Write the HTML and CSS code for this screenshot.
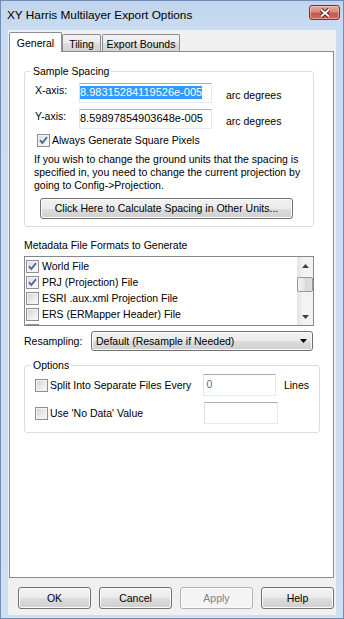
FILE: index.html
```html
<!DOCTYPE html>
<html lang="en">

<head>
  <meta charset="UTF-8">
  <meta name="viewport" content="width=device-width, initial-scale=1.0">
  <title>XY Harris Multilayer Export Options</title>

  <link rel="stylesheet" href="styles.css">
</head>

<body>
  <div id="window">
    <div id="titlebar">
      <span id="title">XY Harris Multilayer Export Options</span>
      <div id="closeBtn">
        <svg width="14" height="10" viewBox="0 0 14 10">
          <path d="M3 1.5 L11 8.5 M11 1.5 L3 8.5" stroke="#5a1a14" stroke-width="3.8" fill="none" />
          <path d="M3 1.5 L11 8.5 M11 1.5 L3 8.5" stroke="#ffffff" stroke-width="2" fill="none" />
        </svg>
      </div>
    </div>

    <div id="client">
      <div class="tabs">
        <div class="tab tabGeneral selected">General</div>
        <div class="tab tabTiling">Tiling</div>
        <div class="tab tabBounds">Export Bounds</div>
      </div>

      <div class="panel">
        <fieldset class="group spacingGroup">
          <legend>Sample Spacing</legend>

          <div class="axisRow">
            <span class="axisLabel">X-axis:</span>
            <div class="textBox axisBox"><span class="selText">8.98315284119526e-005</span></div>
            <span class="units">arc degrees</span>
          </div>

          <div class="axisRow secondRow">
            <span class="axisLabel">Y-axis:</span>
            <div class="textBox axisBox">8.59897854903648e-005</div>
            <span class="units">arc degrees</span>
          </div>

          <div class="checkRow squareRow">
            <span class="check checked">
              <svg width="11" height="11" viewBox="0 0 11 11"><path d="M2 5.2 L4.3 8 L9 2.2" /></svg>
            </span>
            <span>Always Generate Square Pixels</span>
          </div>

          <p class="note">If you wish to change the ground units that the spacing is<br>
            specified in, you need to change the current projection by<br>
            going to Config-&gt;Projection.</p>

          <div class="button calcButton">Click Here to Calculate Spacing in Other Units...</div>
        </fieldset>

        <div class="listTitle">Metadata File Formats to Generate</div>

        <div class="listBox">
          <div class="listItems">
            <div class="listItem">
              <span class="check checked">
                <svg width="11" height="11" viewBox="0 0 11 11"><path d="M2 5.2 L4.3 8 L9 2.2" /></svg>
              </span>
              <span>World File</span>
            </div>
            <div class="listItem">
              <span class="check checked">
                <svg width="11" height="11" viewBox="0 0 11 11"><path d="M2 5.2 L4.3 8 L9 2.2" /></svg>
              </span>
              <span>PRJ (Projection) File</span>
            </div>
            <div class="listItem">
              <span class="check"></span>
              <span>ESRI .aux.xml Projection File</span>
            </div>
            <div class="listItem">
              <span class="check"></span>
              <span>ERS (ERMapper Header) File</span>
            </div>
            <div class="listItem">
              <span class="check"></span>
              <span>TAB (MapInfo) File</span>
            </div>
          </div>
          <div class="scrollBar">
            <div class="scrollArrow">
              <svg width="7" height="4" viewBox="0 0 7 4"><path d="M0 4 L3.5 0 L7 4 Z" /></svg>
            </div>
            <div class="scrollThumb"></div>
            <div class="scrollFill"></div>
            <div class="scrollArrow">
              <svg width="7" height="4" viewBox="0 0 7 4"><path d="M0 0 L7 0 L3.5 4 Z" /></svg>
            </div>
          </div>
        </div>

        <div class="resampleRow">
          <span class="resampleLabel">Resampling:</span>
          <div class="comboBox">
            <span>Default (Resample if Needed)</span>
            <svg width="7" height="4" viewBox="0 0 7 4"><path d="M0 0 L7 0 L3.5 4 Z" /></svg>
          </div>
        </div>

        <fieldset class="group optionsGroup">
          <legend>Options</legend>

          <div class="optionRow">
            <div class="optionLabel">
              <span class="check"></span>
              <span>Split Into Separate Files Every</span>
            </div>
            <div class="textBox optionBox grayText">0</div>
            <span class="linesLabel">Lines</span>
          </div>

          <div class="optionRow secondOption">
            <div class="optionLabel">
              <span class="check"></span>
              <span>Use 'No Data' Value</span>
            </div>
            <div class="textBox optionBox"></div>
          </div>
        </fieldset>
      </div>

      <div class="buttonRow">
        <div class="button dialogButton">OK</div>
        <div class="button dialogButton">Cancel</div>
        <div class="button dialogButton disabled">Apply</div>
        <div class="button dialogButton">Help</div>
      </div>
    </div>
  </div>
</body>

</html>
```

FILE: styles.css
```css
body {
  margin: 0px;
  font-family: "Liberation Sans", Arial, sans-serif;
  font-size: 10.5px;
  line-height: 13px;
  color: #000000;
}

#window {
  display: flex;
  flex-direction: column;
  width: 344px;
  height: 619px;
  box-sizing: border-box;
  background: linear-gradient(#bfd4ed 0px, #cadcf1 30px, #cfdff2 100%);
  box-shadow: inset 0 0 0 1px #6f8fb8;
}

#titlebar {
  display: flex;
  align-items: flex-start;
  height: 30px;
}

#title {
  margin: 8px 0px 0px 7px;
  font-size: 11.8px;
  line-height: 14px;
}

#closeBtn {
  display: flex;
  justify-content: center;
  align-items: center;
  width: 31px;
  height: 15px;
  margin: 5px 4px 0px auto;
  box-sizing: border-box;
  border: 1px solid #7e3128;
  border-radius: 3px;
  background: linear-gradient(#e8a99d 0%, #d88a7d 45%, #c8594a 55%, #cf6a5a 100%);
  box-shadow: inset 0 0 0 1px rgba(255, 220, 210, 0.5);
}

#client {
  display: flex;
  flex-direction: column;
  height: 585px;
  margin: 0px 8px 4px 8px;
  padding-top: 2px;
  box-sizing: border-box;
  background-color: #f0f0f0;
}

/* tabs */

.tabs {
  display: flex;
  align-items: flex-end;
  height: 19px;
  margin-left: 1px;
}

.tab {
  display: flex;
  justify-content: center;
  align-items: center;
  height: 17px;
  padding-top: 2px;
  box-sizing: border-box;
  border: 1px solid #898c95;
  border-bottom: none;
  border-radius: 2px 2px 0px 0px;
  background: linear-gradient(#f3f3f3 0%, #ebebeb 50%, #dddddd 51%, #d4d4d4 100%);
}

.tab.selected {
  position: relative;
  height: 20px;
  margin-bottom: -1px;
  padding-top: 1px;
  background: #ffffff;
}

.tabGeneral {
  width: 53px;
}

.tabTiling {
  width: 39px;
}

.tabBounds {
  width: 78px;
  margin-left: 1px;
}

.panel {
  display: flex;
  flex-direction: column;
  width: 325px;
  height: 527px;
  margin-left: 1px;
  box-sizing: border-box;
  border: 1px solid #898c95;
  background-color: #ffffff;
}

/* group boxes */

.group {
  margin: 0px 0px 0px 14px;
  padding: 5px 10px 7px 10px;
  box-sizing: border-box;
  border: 1px solid #d5dfe5;
  border-radius: 3px;
  min-inline-size: 0px;
}

.group legend {
  margin-left: -4px;
  padding: 0px 2px;
  line-height: 13px;
}

.spacingGroup {
  width: 290px;
  margin-top: 13px;
}

.axisRow {
  display: flex;
  align-items: flex-start;
  height: 20px;
}

.secondRow {
  margin-top: 6px;
}

.axisLabel {
  width: 44px;
  margin-top: 1px;
}

.textBox {
  box-sizing: border-box;
  border: 1px solid #e3e9ef;
  border-top-color: #abadb3;
  border-left-color: #e2e3ea;
  background-color: #ffffff;
  white-space: nowrap;
}

.axisBox {
  width: 133px;
  height: 20px;
  padding: 2px 0px 0px 0px;
  font-size: 11px;
}

.selText {
  display: inline-block;
  background-color: #3399ff;
  color: #ffffff;
}

.units {
  margin: 6px 0px 0px 14px;
}

.checkRow {
  display: flex;
  align-items: center;
  height: 14px;
  margin-top: 4px;
}

.squareRow .check {
  margin: 0px 2px 0px 2px;
}

.check {
  display: inline-flex;
  flex: none;
  width: 13px;
  height: 13px;
  box-sizing: border-box;
  border: 1px solid #8e8f8f;
  background: linear-gradient(135deg, #cfd1d4 0%, #ececec 60%, #f8f8f8 100%);
  box-shadow: inset 0 0 0 1px #f4f4f4;
}

.check.checked {
  background: linear-gradient(135deg, #d9dbde 0%, #f2f2f2 60%, #fbfbfb 100%);
}

.check svg path {
  fill: none;
  stroke: #5468a0;
  stroke-width: 1.9;
}

.note {
  margin: 6px 0px 0px -1px;
  white-space: nowrap;
}

.button {
  display: flex;
  justify-content: center;
  align-items: center;
  box-sizing: border-box;
  border: 1px solid #707070;
  border-radius: 3px;
  background: linear-gradient(#f2f2f2 0%, #ebebeb 50%, #dddddd 51%, #cfcfcf 100%);
  box-shadow: inset 0 0 0 1px #fcfcfc;
}

.calcButton {
  width: 253px;
  height: 21px;
  margin: 6px 0px 0px 5px;
}

/* metadata list */

.listTitle {
  margin: 12px 0px 0px 14px;
}

.listBox {
  display: flex;
  width: 290px;
  height: 70px;
  margin: 4px 0px 0px 14px;
  box-sizing: border-box;
  border: 1px solid #828790;
  overflow: hidden;
}

.listItems {
  flex: 1;
  padding: 1px 0px 0px 1px;
  overflow: hidden;
}

.listItem {
  display: flex;
  align-items: center;
  height: 16px;
}

.listItem .check {
  margin-right: 3px;
}

.scrollBar {
  display: flex;
  flex-direction: column;
  width: 16px;
  background: linear-gradient(90deg, #e3e3e3, #f3f3f3 40%, #f3f3f3);
}

.scrollArrow {
  display: flex;
  justify-content: center;
  align-items: center;
  height: 17px;
}

.scrollArrow path {
  fill: #404040;
}

.scrollThumb {
  height: 15px;
  margin: 3px 0px 0px 0px;
  box-sizing: border-box;
  border: 1px solid #979797;
  border-radius: 2px;
  background: linear-gradient(90deg, #f2f2f2, #e6e6e6 50%, #d8d8d8 51%, #e0e0e0);
}

.scrollFill {
  flex: 1;
}

/* resampling */

.resampleRow {
  display: flex;
  align-items: center;
  height: 20px;
  margin: 5px 0px 0px 14px;
}

.resampleLabel {
  width: 67px;
}

.comboBox {
  display: flex;
  justify-content: space-between;
  align-items: center;
  width: 222px;
  height: 20px;
  padding: 0px 5px 0px 4px;
  box-sizing: border-box;
  border: 1px solid #707070;
  border-radius: 3px;
  background: linear-gradient(#f2f2f2 0%, #ebebeb 50%, #dddddd 51%, #cfcfcf 100%);
  box-shadow: inset 0 0 0 1px #fcfcfc;
}

.comboBox path {
  fill: #000000;
}

/* options */

.optionsGroup {
  width: 296px;
  margin-top: 8px;
  padding: 2px 10px 8px 10px;
}

.optionRow {
  display: flex;
  align-items: center;
  height: 22px;
}

.secondOption {
  margin-top: 6px;
}

.optionLabel {
  display: flex;
  align-items: center;
  gap: 2px;
  width: 169px;
}

.optionBox {
  width: 74px;
  height: 22px;
  padding: 3px 0px 0px 3px;
}

.grayText {
  color: #6d6d6d;
}

.linesLabel {
  margin-left: 8px;
}

/* dialog buttons */

.buttonRow {
  display: flex;
  gap: 8px;
  margin-top: 9px;
  padding-left: 10px;
}

.dialogButton {
  width: 73px;
  height: 22px;
}

.dialogButton.disabled {
  border-color: #adb2b5;
  background: #f4f4f4;
  color: #838383;
}
```
